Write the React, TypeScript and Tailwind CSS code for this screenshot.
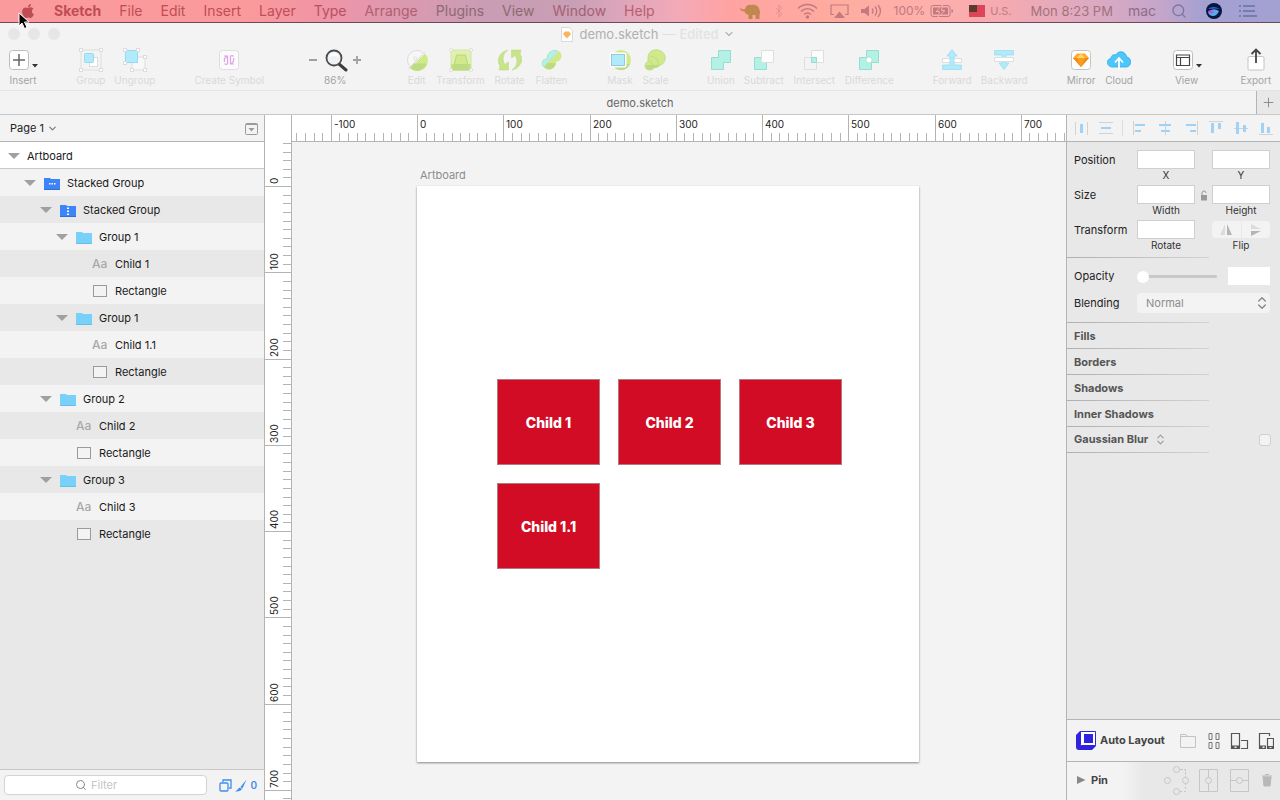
import { ReactNode } from "react";
import clsx from "clsx";
import { Bluetooth, ChevronDown, ChevronsUpDown, Plus, Search } from "lucide-react";
import { FaApple } from "react-icons/fa";

type Layer = {
  name: string;
  depth: 1 | 2 | 3 | 4;
  kind: "row" | "column" | "group" | "text" | "shape";
};

type ToolProps = {
  label: string;
  width: string;
  children: ReactNode;
  enabled?: boolean;
};

const menus = [
  { name: "File", color: "text-[#bf4d55]" },
  { name: "Edit", color: "text-[#bf4d55]" },
  { name: "Insert", color: "text-[#bf4d55]" },
  { name: "Layer", color: "text-[#bf4d58]" },
  { name: "Type", color: "text-[#b8505f]" },
  { name: "Arrange", color: "text-[#b0606f]" },
  { name: "Plugins", color: "text-[#8d6a70]" },
  { name: "View", color: "text-[#8d6a70]" },
  { name: "Window", color: "text-[#a55f72]" },
  { name: "Help", color: "text-[#b76070]" },
];

const layers: Layer[] = [
  { name: "Stacked Group", depth: 1, kind: "row" },
  { name: "Stacked Group", depth: 2, kind: "column" },
  { name: "Group 1", depth: 3, kind: "group" },
  { name: "Child 1", depth: 4, kind: "text" },
  { name: "Rectangle", depth: 4, kind: "shape" },
  { name: "Group 1", depth: 3, kind: "group" },
  { name: "Child 1.1", depth: 4, kind: "text" },
  { name: "Rectangle", depth: 4, kind: "shape" },
  { name: "Group 2", depth: 2, kind: "group" },
  { name: "Child 2", depth: 3, kind: "text" },
  { name: "Rectangle", depth: 3, kind: "shape" },
  { name: "Group 3", depth: 2, kind: "group" },
  { name: "Child 3", depth: 3, kind: "text" },
  { name: "Rectangle", depth: 3, kind: "shape" },
];

const indent = { 1: "pl-6", 2: "pl-10", 3: "pl-14", 4: "pl-18" };

const ZOOM = 0.8625;

function MenuBar() {
  return (
    <header className="flex h-[23px] shrink-0 items-center border-b border-[#6b4a55] bg-[linear-gradient(90deg,#fb9a9c_0%,#fb9a9c_19%,#f095a5_25%,#dd99b0_31%,#c99db4_38%,#c99fb5_45%,#dba5bb_48%,#f3aab8_53%,#ffa3a2_57%,#ffab9f_65%,#ffb0aa_72%,#f3aab2_79%,#d6a9c4_87%,#c3a5cb_91%,#a3a1d1_94%,#a3a1d1_100%)] pr-[23px] pl-5 text-[14px] leading-[22px]">
      <nav className="flex items-center gap-[18px]">
        <button aria-label="Apple" className="text-[#bf4d55]">
          <FaApple size={16} />
        </button>
        <button className="font-bold text-[#bf4d55]">Sketch</button>
        {menus.map((menu) => (
          <button key={menu.name} className={menu.color}>
            {menu.name}
          </button>
        ))}
      </nav>
      <div className="ml-auto flex items-center gap-[15px] text-[#c07a80]">
        <svg width="22" height="17" viewBox="0 0 22 17" fill="#c08850">
          <path d="M1 4c1 2 3 3 5 2C7 2 10 1 12 2c4-1 8 1 8.500 5 1 2 .5 4 0 5v4h-4v-4h-3v4H9.500v-4C7 11 6 10 5.500 8.500 2.500 8.500 1 7 1 4z" />
        </svg>
        <Bluetooth size={14} strokeWidth={1.25} className="-mx-1 opacity-60" />
        <div className="flex items-center gap-3">
          <svg width="21" height="16" viewBox="0 0 21 16" fill="none" stroke="currentColor" strokeWidth="1.500">
            <path d="M1 5.500C6.500.2 14.500.2 20 5.500M4 8.500c4-3.600 9-3.600 13 0M7 11.500c2.200-1.900 4.800-1.900 7 0" />
            <circle cx="10.500" cy="14" r="1" fill="currentColor" />
          </svg>
          <svg width="19" height="15" viewBox="0 0 19 15">
            <path d="M4 10.500H1V1h17v9.500h-3" fill="none" stroke="currentColor" strokeWidth="1.200" />
            <path d="M9.500 7.500l5.500 6.500H4z" fill="currentColor" />
          </svg>
          <svg width="21" height="14" viewBox="0 0 21 14" fill="none" stroke="currentColor" strokeWidth="1.300">
            <path d="M0 5v4h3.500L8 12.500v-11L3.500 5z" fill="currentColor" stroke="none" />
            <path d="M11 4.500q2 2.500 0 5M14 2.500q3.500 4.500 0 9M17 1q5 6 0 12" />
          </svg>
          <span className="text-[12px]">100%</span>
        </div>
        <svg width="24" height="14" viewBox="0 0 24 14" className="-ml-2.5">
          <rect x="1" y="1.500" width="19" height="11" rx="2" fill="none" stroke="currentColor" />
          <rect x="3" y="3.500" width="15" height="7" fill="currentColor" />
          <path d="M21.500 5v4l1.500-1V6z" fill="currentColor" />
          <path d="M12.500 1L6 7.500h3.500L8 13l7-6.500h-3.500z" fill="currentColor" stroke="#ffb0aa" />
        </svg>
        <div className="flex items-center gap-[5px]">
          <svg width="16" height="12" viewBox="0 0 16 12">
            <path d="M0 0h16v12H0z" fill="#dd4558" />
            <path d="M0 0h8v7H0z" fill="#5d3a30" />
          </svg>
          <span className="text-[11px]">U.S.</span>
        </div>
        <span className="pl-1 text-[13px] text-[#a1737f]">Mon 8:23 PM</span>
        <span className="text-[#8d6d8a]">mac</span>
        <Search size={16} strokeWidth={2} className="text-[#7a789f]" />
        <svg width="20" height="18" viewBox="0 0 20 18" className="ml-0.5">
          <circle cx="10" cy="9" r="8" fill="#07163f" />
          <path d="M4 7q5-4 12 0-4-1-12 0z" fill="#2c6fd8" />
          <path d="M4 10q5-5 11-1-2 5-6 5-4 0-5-4z" fill="#5aa8e8" />
          <path d="M4 9q3-2 6 1-4 3-6-1z" fill="#c04be0" />
        </svg>
        <svg width="18" height="12" viewBox="0 0 18 12" stroke="#6670a5" strokeWidth="1.500">
          <path d="M0 1h2M4 1h12M0 6h2M4 6h12M0 11h2M4 11h14" />
        </svg>
      </div>
    </header>
  );
}

function Tool({ label, width, children, enabled }: ToolProps) {
  return (
    <button className={clsx("flex flex-col items-center", width)}>
      <span className="flex h-6 items-center">{children}</span>
      <span
        className={clsx(
          "text-[10px] leading-4 whitespace-nowrap",
          enabled ? "text-[#a3a3a3]" : "text-[#d9d9d9]"
        )}
      >
        {label}
      </span>
    </button>
  );
}

function ToolGroup({ children }: { children: ReactNode }) {
  return <div className="flex items-start gap-[9px]">{children}</div>;
}

function Icon({ children, size = 24 }: { children: ReactNode; size?: number }) {
  return (
    <svg width={size} height="24" viewBox={`0 0 ${size} 24`} fill="none" className="shrink-0">
      {children}
    </svg>
  );
}

function Handles({ points }: { points: number[][] }) {
  return (
    <>
      {points.map(([x, y]) => (
        <rect key={`${x}-${y}`} x={x - 1.5} y={y - 1.5} width="3" height="3" fill="#fff" stroke="#dcdcdc" />
      ))}
    </>
  );
}

function Toolbar() {
  return (
    <div className="flex h-[46px] shrink-0 justify-between border-b border-[#e4e4e4] px-2 pt-[3px]">
      <ToolGroup>
        <Tool label="Insert" width="w-[30px]" enabled>
          <Icon size={30}>
            <rect x="1.500" y="2.500" width="19" height="19" rx="3" fill="#fff" stroke="#bdbdbd" />
            <path d="M11 6v12M5 12h12" stroke="#666" strokeWidth="1.500" />
            <path d="M24 16h6l-3 3.500z" fill="#333" />
          </Icon>
        </Tool>
      </ToolGroup>
      <ToolGroup>
        <Tool label="Group" width="w-[29px]">
          <Icon>
            <rect x="2" y="2" width="20" height="20" stroke="#dedede" />
            <rect x="10.500" y="9.500" width="8" height="9" fill="#fff" stroke="#dcdcdc" />
            <rect x="5.500" y="5.500" width="9" height="9" rx="1" fill="#b0eafb" stroke="#94dbf0" />
            <Handles points={[[2, 2], [22, 2], [2, 22], [22, 22]]} />
          </Icon>
        </Tool>
        <Tool label="Ungroup" width="w-[41px]">
          <Icon>
            <rect x="9" y="9" width="13" height="13" fill="#f8f8f8" stroke="#dedede" />
            <rect x="2.500" y="2.500" width="12" height="12" fill="#b0eafb" stroke="#94dbf0" />
            <Handles points={[[2, 2], [15, 2], [2, 15], [22, 9], [9, 22], [22, 22]]} />
          </Icon>
        </Tool>
      </ToolGroup>
      <ToolGroup>
        <Tool label="Create Symbol" width="w-[71px]">
          <Icon>
            <rect x="2.500" y="2.500" width="19" height="19" rx="3" fill="#fbfbfb" stroke="#dedede" />
            <path d="M7 8h3.500v8q-2 1-3-.5M10.500 8Q6.500 10 7.500 14M17 16h-3.500V8q2-1 3 .5M13.500 16q4-2 3-6" stroke="#dfa3ea" strokeWidth="1.200" />
          </Icon>
        </Tool>
      </ToolGroup>
      <ToolGroup>
        <Tool label="86%" width="w-16" enabled>
          <Icon size={54}>
            <path d="M1 12h8M45 12h8M49 8v8" stroke="#a0a0a0" strokeWidth="1.800" />
            <path d="M31 16l7 6" stroke="#3d3d3d" strokeWidth="3" strokeLinecap="round" />
            <circle cx="26" cy="10" r="7.500" fill="#eef2f4" stroke="#4b4b4b" strokeWidth="1.800" />
            <path d="M21 9q1-4 5-4.500 4 .5 5 4.500-5-2-10 0z" fill="#fff" />
          </Icon>
        </Tool>
      </ToolGroup>
      <ToolGroup>
        <Tool label="Edit" width="w-[22px]">
          <Icon>
            <circle cx="12" cy="12" r="9.500" fill="#f7f7f7" stroke="#dcdcdc" />
            <path d="M5 20L20 5.500A10 10 0 0 1 5 20z" fill="#cfe98b" />
            <path d="M5 20l4-4.500h12.500A10 10 0 0 1 5 20z" fill="#bddc82" />
            <path d="M3 21L20 4" stroke="#dcdcdc" />
            <circle cx="10" cy="10.500" r="1.500" fill="#fff" stroke="#dcdcdc" />
          </Icon>
        </Tool>
        <Tool label="Transform" width="w-[48px]">
          <Icon>
            <path d="M2 2h20v20H2z" fill="#e0efb4" stroke="#d3e79c" />
            <path d="M2 16h20v6H2z" fill="#c5df91" />
            <path d="M4 22L7.500 7h9L20 22z" fill="#cfe98b" stroke="#b9d67c" />
            <path d="M5 16h14l1 6H4z" fill="#bddc82" />
            {[[2, 2], [22, 2], [2, 22], [22, 22]].map(([x, y]) => (
              <circle key={`${x}-${y}`} cx={x} cy={y} r="1.500" fill="#fff" stroke="#dcdcdc" />
            ))}
          </Icon>
        </Tool>
        <Tool label="Rotate" width="w-[32px]">
          <Icon>
            <path d="M10 2C1 4-2 13 2 18l-1 4h9.500v-8L7 16.500C3.500 12 5 5 10 2z" fill="#c8e489" stroke="#b9d67c" strokeWidth=".5" />
            <path d="M14 22c9-2 12-11 8-16l1-4h-9.500v8L17 7.500c3.500 4.500 2 11.500-3 14.500z" fill="#c8e489" stroke="#b9d67c" strokeWidth=".5" />
          </Icon>
        </Tool>
        <Tool label="Flatten" width="w-[34px]">
          <Icon>
            <path d="M3 18c-2-4 0-7 4-7 0-7 6-10 11-8L4 19z" fill="#b3f0e6" stroke="#97dccc" strokeWidth=".7" />
            <path d="M4 19L19 3c5 4 2 10-3 11-1 6-7 10-12 5z" fill="#cfe98b" />
            <path d="M4 19l4-4h8c-1 6-7 9-12 4z" fill="#bddc82" />
          </Icon>
        </Tool>
      </ToolGroup>
      <ToolGroup>
        <Tool label="Mask" width="w-[26px]">
          <Icon>
            <circle cx="13" cy="12" r="10" fill="#cfe98b" />
            <path d="M4 16h18q-3 6-9 6-6 0-9-6z" fill="#bddc82" />
            <rect x="2.500" y="5.500" width="15" height="13" rx="1" fill="#b0eafb" stroke="#fff" strokeWidth="2" />
            <rect x="3.500" y="6.500" width="13" height="11" stroke="#85bfd2" strokeWidth=".8" />
          </Icon>
        </Tool>
        <Tool label="Scale" width="w-[27px]">
          <Icon>
            <path d="M2 18C2 15 4 14 5 13L5 8C6 3 11 1 15 2c6 1 8 6 7 10-1 3-3 5-5 5-1 2-3 2-6 3-2 3-9 3-9-2z" fill="#cfe98b" stroke="#b9d67c" strokeWidth=".7" />
            <path d="M2.500 17h14c-1 2-3 2-6 3-2 3-8 2-8-3z" fill="#bddc82" />
            <path d="M5 13q4 0 6 6M7 8q7 0 9 9" stroke="#b9d67c" strokeWidth=".7" />
          </Icon>
        </Tool>
      </ToolGroup>
      <ToolGroup>
        <Tool label="Union" width="w-[27px]">
          <Icon>
            <path d="M9.500 2.500h12v12h-7v7h-12v-12h7z" fill="#b3f0e6" stroke="#97dccc" />
          </Icon>
        </Tool>
        <Tool label="Subtract" width="w-[41px]">
          <Icon>
            <path d="M2.500 9.500h12v12h-12z" fill="#b3f0e6" stroke="#97dccc" />
            <path d="M9.500 2.500h12v12h-12z" fill="#fcfcfc" stroke="#dedede" />
          </Icon>
        </Tool>
        <Tool label="Intersect" width="w-[42px]">
          <Icon>
            <path d="M9.500 2.500h12v12h-12z" fill="#fcfcfc" stroke="#dedede" />
            <path d="M2.500 9.500h12v12h-12z" stroke="#dedede" />
            <path d="M9.500 9.500h5v5h-5z" fill="#b3f0e6" stroke="#97dccc" />
          </Icon>
        </Tool>
        <Tool label="Difference" width="w-[50px]">
          <Icon>
            <path d="M9.500 2.500h12v12h-7v7h-12v-12h7z" fill="#b3f0e6" stroke="#97dccc" />
            <circle cx="12" cy="12" r="3" fill="#fff" stroke="#97dccc" strokeWidth=".6" />
          </Icon>
        </Tool>
      </ToolGroup>
      <ToolGroup>
        <Tool label="Forward" width="w-[39px]">
          <Icon>
            <path d="M2.500 10.500h19v4h-19z" fill="#fff" stroke="#dedede" />
            <path d="M12 1.500L17 8h-3v9h7.500v4.500h-19V17H10V8H7z" fill="#b0eafb" stroke="#94dbf0" strokeWidth=".7" />
          </Icon>
        </Tool>
        <Tool label="Backward" width="w-[47px]">
          <Icon>
            <path d="M2.500 2.500h19V7H14v8h3l-5 6.500L7 15h3V7H2.500z" fill="#b0eafb" stroke="#94dbf0" strokeWidth=".7" />
            <path d="M2.500 9.500h19v4h-19z" fill="#fff" stroke="#dedede" />
          </Icon>
        </Tool>
      </ToolGroup>
      <ToolGroup>
        <Tool label="Mirror" width="w-[30px]" enabled>
          <Icon>
            <rect x="2.500" y="2.500" width="19" height="19" rx="3" fill="#fff" stroke="#c4c4c4" />
            <path d="M8 5.500h8l4 4.500-8 9-8-9z" fill="#fdad2a" />
            <path d="M4 10h16l-8 9z" fill="#ef8b16" />
            <path d="M8 10h8l-4 9z" fill="#fb9f1e" />
            <path d="M12 5.500L8 10h8z" fill="#ffd467" />
          </Icon>
        </Tool>
        <Tool label="Cloud" width="w-[28px]" enabled>
          <Icon>
            <path d="M5 19C-1 18-1 11 4 10.500 4 7 7 6 9 7c2-5 10-4 10.500 2 5 0 6 9 0 10z" fill="#4cc6fb" stroke="#2fa9e8" strokeWidth=".8" />
            <path d="M12 22V11M8 14.500L12 10l4 4.500" stroke="#fff" strokeWidth="1.800" />
          </Icon>
        </Tool>
      </ToolGroup>
      <ToolGroup>
        <Tool label="View" width="w-[30px]" enabled>
          <Icon size={30}>
            <rect x="1.500" y="2.500" width="19" height="19" rx="3" fill="#fff" stroke="#bdbdbd" />
            <path d="M4.500 7h13v10.500h-13zM4.500 9.500h13M8.500 9.500v8" stroke="#444" strokeWidth="1.200" />
            <path d="M24 16h6l-3 3.500z" fill="#333" />
          </Icon>
        </Tool>
      </ToolGroup>
      <ToolGroup>
        <Tool label="Export" width="w-8" enabled>
          <Icon>
            <path d="M5.500 8.500h13q1.500 0 1.500 1.500v11q0 1-1.500 1h-13q-1.500 0-1.500-1V10q0-1.500 1.500-1.500z" fill="#fff" stroke="#c4c4c4" />
            <path d="M12 15V2M7.500 6L12 1.500 16.500 6" stroke="#444" strokeWidth="1.800" />
          </Icon>
        </Tool>
      </ToolGroup>
    </div>
  );
}

function TitleBar() {
  return (
    <div className="grid h-[22px] shrink-0 grid-cols-[1fr_auto_1fr] items-center pl-2">
      <div className="flex gap-2">
        <button aria-label="Close" className="size-3 rounded-full bg-[#e6e6e6]" />
        <button aria-label="Minimize" className="size-3 rounded-full bg-[#e6e6e6]" />
        <button aria-label="Zoom" className="size-3 rounded-full bg-[#e6e6e6]" />
      </div>
      <div className="flex items-center gap-1 pl-2 text-[13px] leading-5">
        <svg width="12" height="15" viewBox="0 0 12 15" className="mr-0.5">
          <path d="M.5.5h8l3 3v11H.5z" fill="#fff" stroke="#dadada" />
          <path d="M4 4.500h4l2 2.500-4 4.500L2 7z" fill="#fbb45a" />
        </svg>
        <h1 className="text-[#b0b0b0]">demo.sketch</h1>
        <span className="text-[#dedede]">—</span>
        <span className="font-medium text-[#e2e2e2]">Edited</span>
        <ChevronDown size={12} strokeWidth={2.5} className="text-[#b5b5b5]" />
      </div>
    </div>
  );
}

function LayerIcon({ kind }: { kind: Layer["kind"] }) {
  if (kind === "text") {
    return <span className="w-4 text-[12px] font-medium text-[#a8a8a8]">Aa</span>;
  }
  if (kind === "shape") {
    return <span className="mx-px h-3 w-3.5 border border-[#9a9a9a] bg-[#f3f3f3]" />;
  }
  const stacked = kind !== "group";
  return (
    <svg width="16" height="13" viewBox="0 0 16 13">
      <path d="M0 1h6l1 1h9v10.500H0z" fill={stacked ? "#3d85f7" : "#79d0f8"} />
      <path d="M0 12h16v1H0z" fill={stacked ? "#2f6fd8" : "#67bfe6"} />
      {kind === "row" && <path d="M5 6h1.500v1.500H5zM7.500 6H9v1.500H7.500zM10 6h1.500v1.500H10z" fill="#fff" />}
      {kind === "column" && <path d="M7 3.500h2V5H7zM7 6.500h2V8H7zM7 9.500h2V11H7z" fill="#fff" />}
    </svg>
  );
}

function Disclosure() {
  return (
    <svg width="12" height="6" viewBox="0 0 12 6" fill="#a0a0a0">
      <path d="M0 0h12L6 6z" />
    </svg>
  );
}

function Sidebar() {
  return (
    <aside className="flex w-[265px] shrink-0 flex-col border-r border-[#b4b4b4] bg-[#e8e8e8]">
      <div className="flex h-[27px] shrink-0 items-center justify-between border-b border-[#b4b4b4] bg-[#f3f3f3] pr-[5px] pl-[10px]">
        <button className="flex items-center gap-[3px] text-[11px] text-[#222]">
          Page 1
          <ChevronDown size={11} strokeWidth={2.5} className="text-[#777]" />
        </button>
        <button aria-label="Toggle page list" className="pt-0.5">
          <svg width="14" height="12" viewBox="0 0 14 12" fill="none">
            <rect x=".5" y=".5" width="12" height="11" rx="1" stroke="#9a9a9a" />
            <path d="M1 1.500h12" stroke="#9a9a9a" />
            <path d="M3.500 5h6l-3 3.500z" fill="#9a9a9a" />
          </svg>
        </button>
      </div>
      <ul className="flex-1 overflow-hidden text-[11px] text-[#1a1a1a]">
        <li className="flex h-[27px] items-center gap-[7px] border-b border-[#c8c8c8] bg-white pt-0.5 pl-2">
          <Disclosure />
          Artboard
        </li>
        {layers.map((layer, i) => {
          const leaf = layer.kind === "text" || layer.kind === "shape";
          return (
            <li
              key={i}
              className={clsx(
                "flex h-[27px] items-center gap-[7px] pt-px",
                indent[layer.depth],
                i % 2 === 0 ? "bg-[#f3f3f3]" : "bg-[#e8e8e8]"
              )}
            >
              <span className="w-[13px]">{!leaf && <Disclosure />}</span>
              <LayerIcon kind={layer.kind} />
              {layer.name}
            </li>
          );
        })}
      </ul>
      <div className="flex h-[31px] shrink-0 items-center border-t border-[#c8c8c8] bg-[#f3f3f3] pr-[7px] pl-1">
        <label className="flex h-5 w-[203px] items-center gap-1 rounded border border-[#d4d4d4] bg-white pl-[70px]">
          <Search size={12} strokeWidth={2} className="shrink-0 text-[#888]" />
          <input
            aria-label="Filter layers"
            placeholder="Filter"
            className="w-full min-w-0 text-[11px] outline-none placeholder:text-[#c4c4c4]"
          />
        </label>
        <div className="ml-auto flex items-center gap-[3px] text-[#3d8ff0]">
          <svg width="13" height="13" viewBox="0 0 13 13" fill="none" stroke="currentColor" strokeWidth="1.300">
            <path d="M4 3V1h8v8h-2" />
            <rect x="1" y="4" width="8" height="8" rx="1" />
          </svg>
          <svg width="12" height="13" viewBox="0 0 12 13" fill="currentColor">
            <path d="M11.500.5L7.500 9.500l-2-1.500zM5 8.500l2 1.500c-1 2-4 2.500-7 2.500 2-.5 3-3.500 5-4z" />
          </svg>
          <span className="text-[10px] font-semibold">0</span>
        </div>
      </div>
    </aside>
  );
}

// ticks every 10 units, labelled every 100
function HorizontalRuler() {
  const ticks = Array.from({ length: 90 }, (_, i) => (i - 14) * 10);
  return (
    <svg className="block h-[27px] w-full border-b border-[#b4b4b4] bg-white">
      {ticks.map((value) => {
        const x = Math.round(125 + value * ZOOM);
        const major = value % 100 === 0;
        return (
          <g key={value}>
            <rect x={x} y={major ? 0 : 18} width="1" height="27" fill="#b4b4b4" />
            {major && (
              <text x={x + 3} y="13" fontSize="10" fill="#222">
                {value}
              </text>
            )}
          </g>
        );
      })}
    </svg>
  );
}

function VerticalRuler() {
  const ticks = Array.from({ length: 82 }, (_, i) => (i - 5) * 10);
  return (
    <svg className="block w-full flex-1">
      {ticks.map((value) => {
        const y = Math.round(44 + value * ZOOM);
        const major = value % 100 === 0;
        return (
          <g key={value}>
            <rect x={major ? 0 : 18} y={y} width="27" height="1" fill="#b4b4b4" />
            {major && (
              <text transform={`translate(13 ${y - 2}) rotate(-90)`} fontSize="10" fill="#222">
                {value}
              </text>
            )}
          </g>
        );
      })}
    </svg>
  );
}

function Canvas() {
  return (
    <main className="flex min-w-0 flex-1">
      <div className="flex w-[27px] shrink-0 flex-col border-r border-[#b4b4b4] bg-white">
        <div className="h-[27px] shrink-0" />
        <VerticalRuler />
      </div>
      <div className="flex min-w-0 flex-1 flex-col">
        <HorizontalRuler />
        <div className="relative flex-1 overflow-hidden bg-[#f3f3f3]">
          <section className="absolute top-6 left-[125px]">
            <h2 className="pb-0.5 pl-[3px] text-[11px] leading-[18px] text-[#8c8c8c]">Artboard</h2>
            <div className="flex h-[576px] w-[502px] flex-wrap content-start gap-[18px] bg-white pt-[193px] pr-16 pl-20 shadow-[0_1px_2px_rgba(0,0,0,0.45)]">
              {["Child 1", "Child 2", "Child 3", "Child 1.1"].map((name) => (
                <div
                  key={name}
                  className="flex h-[86px] w-[103px] items-center justify-center border border-[#b07a7e] bg-[#d20c24] text-[14px] font-extrabold text-white"
                >
                  {name}
                </div>
              ))}
            </div>
          </section>
        </div>
      </div>
    </main>
  );
}

function Divider() {
  return <div className="h-px w-2/3 bg-linear-to-r from-[#b0b0b0] to-[#d2d2d2]" />;
}

function Field({ label }: { label: string }) {
  return (
    <label className="flex w-[58px] flex-col items-center text-[10px] leading-3 text-[#333]">
      <input className="h-[19px] w-full border border-[#cfcfcf] bg-white px-1 outline-none" />
      <span>{label}</span>
    </label>
  );
}

function AlignBar() {
  const items = [
    { name: "Distribute horizontally", gray: "M2.500 2v13M14.500 2v13", blue: "M7 4h3v9H7z" },
    { name: "Distribute vertically", gray: "M1 2.500h14M1 13.500h14", blue: "M3 7h10v2H3z" },
    { name: "Align left", gray: "M1.500 1v14", blue: "M3 4h10v2H3zM3 10h6v2H3z" },
    { name: "Align center", gray: "M8.500 1v14", blue: "M2 4h12v2H2zM4 10h9v2H4z" },
    { name: "Align right", gray: "M14.500 1v14", blue: "M3 4h10v2H3zM7 10h6v2H7z" },
    { name: "Align top", gray: "M1 1.500h14", blue: "M3 3h3v10H3zM10 3h3v6h-3z" },
    { name: "Align middle", gray: "M1 8.500h14", blue: "M3 2h3v12H3zM10 5h3v7h-3z" },
    { name: "Align bottom", gray: "M1 14.500h14", blue: "M3 3h3v10H3zM9 7h3v6H9z" },
  ];
  return (
    <div className="flex h-[27px] shrink-0 items-center justify-between border-b border-[#b4b4b4] bg-[#f3f3f3] px-[6px]">
      {items.map((item, i) => (
        <button
          key={item.name}
          aria-label={item.name}
          className={clsx(i === 1 && "border-r border-[#dcdcdc] pr-2")}
        >
          <svg width="16" height="16" viewBox="0 0 16 16">
            <path d={item.gray} stroke="#d2d2d2" />
            <path d={item.blue} fill="#a0d2f7" />
          </svg>
        </button>
      ))}
    </div>
  );
}

function Inspector() {
  return (
    <aside className="flex w-[214px] shrink-0 flex-col border-l border-[#b4b4b4] bg-[#e8e8e8] text-[11px] text-[#222]">
      <AlignBar />
      <div className="flex flex-col pt-2 pr-[10px] pb-[2px] pl-[7px]">
        <div className="flex h-[35px] items-start">
          <span className="w-[63px] leading-5">Position</span>
          <Field label="X" />
          <span className="flex-1" />
          <Field label="Y" />
        </div>
        <div className="flex h-[35px] items-start">
          <span className="w-[63px] leading-5">Size</span>
          <Field label="Width" />
          <button aria-label="Lock proportions" className="flex h-5 flex-1 items-center justify-center">
            <svg width="8" height="11" viewBox="0 0 8 11">
              <path d="M2 5V3q0-2 2-2t2 2" fill="none" stroke="#999" />
              <rect x="1" y="5" width="6" height="5.500" fill="#999" />
            </svg>
          </button>
          <Field label="Height" />
        </div>
        <div className="flex h-[35px] items-start">
          <span className="w-[63px] leading-5">Transform</span>
          <Field label="Rotate" />
          <span className="flex-1" />
          <div className="w-[58px] text-center text-[10px] leading-3 text-[#333]">
            <div className="flex h-[19px] gap-px py-px">
              <button
                aria-label="Flip horizontal"
                className="flex flex-1 items-center justify-center rounded-l bg-[#f3f3f3]"
              >
                <svg width="14" height="11" viewBox="0 0 14 11">
                  <path d="M6 0v11H1z" fill="#dcdcdc" />
                  <path d="M8 0v11h5z" fill="#b5b5b5" />
                </svg>
              </button>
              <button
                aria-label="Flip vertical"
                className="flex flex-1 items-center justify-center rounded-r bg-[#f3f3f3]"
              >
                <svg width="12" height="12" viewBox="0 0 12 12">
                  <path d="M1 0v5h10z" fill="#dcdcdc" />
                  <path d="M1 12V7h10z" fill="#b5b5b5" />
                </svg>
              </button>
            </div>
            <span className="block">Flip</span>
          </div>
        </div>
      </div>
      <Divider />
      <div className="flex flex-col gap-[7px] pt-2 pr-[10px] pb-[9px] pl-[7px]">
        <div className="flex h-5 items-center">
          <label htmlFor="opacity" className="w-[63px]">
            Opacity
          </label>
          <input
            id="opacity"
            type="range"
            defaultValue={0}
            className="h-3 w-20 appearance-none bg-transparent [&::-webkit-slider-runnable-track]:h-[3px] [&::-webkit-slider-runnable-track]:rounded [&::-webkit-slider-runnable-track]:bg-[#c8c8c8] [&::-webkit-slider-thumb]:-mt-1 [&::-webkit-slider-thumb]:size-3 [&::-webkit-slider-thumb]:appearance-none [&::-webkit-slider-thumb]:rounded-full [&::-webkit-slider-thumb]:bg-white"
          />
          <input aria-label="Opacity value" className="ml-auto h-[18px] w-[42px] bg-white px-1 outline-none" />
        </div>
        <div className="flex h-5 items-center">
          <label htmlFor="blending" className="w-[63px]">
            Blending
          </label>
          <div className="relative flex-1">
            <select
              id="blending"
              className="h-5 w-full appearance-none rounded bg-[#f3f3f3] pl-[9px] text-[11px] text-[#8c8c8c] outline-none"
            >
              <option>Normal</option>
            </select>
            <ChevronsUpDown
              size={16}
              strokeWidth={2}
              className="pointer-events-none absolute top-[2px] right-0 text-[#888]"
            />
          </div>
        </div>
      </div>
      {["Fills", "Borders", "Shadows", "Inner Shadows"].map((title) => (
        <section key={title}>
          <Divider />
          <h3 className="pt-px pl-[7px] text-[11px] leading-6 font-bold text-[#555]">{title}</h3>
        </section>
      ))}
      <Divider />
      <div className="flex h-[25px] items-center pr-[9px] pl-[7px]">
        <label htmlFor="blur" className="text-[11px] font-bold text-[#555]">
          Gaussian Blur
        </label>
        <ChevronsUpDown size={13} className="ml-[6px] text-[#999]" />
        <input
          id="blur"
          type="checkbox"
          className="ml-auto size-3 appearance-none rounded-[3px] border border-[#d0d0d0] bg-[#f3f3f3]"
        />
      </div>
      <Divider />
      <div className="mt-auto flex h-[42px] shrink-0 items-center border-t border-[#b4b4b4] bg-[#f3f3f3] pr-[6px] pl-2">
        <svg width="22" height="21" viewBox="0 0 22 21" className="mr-[3px]">
          <path d="M5 1L1 5v12q0 3 3 3h13l4-4V1z" fill="#2f23e0" />
          <rect x="5.500" y="1.500" width="15" height="14" rx="1" fill="#fff" stroke="#2f23e0" />
          <rect x="9" y="4" width="9" height="9" fill="#2f23e0" />
        </svg>
        <span className="text-[11px] font-bold text-[#444]">Auto Layout</span>
        <svg width="94" height="18" viewBox="0 0 94 18" fill="none" className="ml-auto">
          <path d="M.5 15.500v-13h5.500l1.500 2h8v11zM.5 4.500h7" stroke="#c2c2c2" />
          <path d="M29 1.500h3v6h-3zM36 1.500h3v6h-3zM29 10.500h3v6h-3zM36 10.500h3v6h-3z" stroke="#777" />
          <path d="M51.500 1.500h8v15h-8zM61 8.500h6.500v8H61" stroke="#555" strokeWidth="1.200" />
          <path d="M51 13.500h9V17h-9zM66 16h2v1h-2z" fill="#555" />
          <path d="M54.500 14.500h2v1.500h-2z" fill="#f3f3f3" />
          <path d="M89.500 4V1.500h-10v15h6.500M87.500 6.500h6v10h-6z" stroke="#555" strokeWidth="1.200" />
          <path d="M79 13.500h7V17h-7zM87 14h7v3h-7z" fill="#555" />
          <path d="M82.500 14.500h2v1.500h-2zM89.500 15h2v1h-2z" fill="#f3f3f3" />
        </svg>
      </div>
      <div className="flex h-[39px] shrink-0 items-center border-t border-[#b4b4b4] bg-linear-to-r from-[#f3f3f3] from-[26%] to-[#e8e8e8] to-[36%] pr-2 pb-0.5 pl-[10px]">
        <svg width="9" height="8" viewBox="0 0 9 8" className="mr-[5px]">
          <path d="M0 0l8.500 4L0 8z" fill="#888" />
        </svg>
        <span className="text-[11px] font-bold text-[#444]">Pin</span>
        <svg width="108" height="30" viewBox="0 0 108 30" fill="none" stroke="#c6c6c6" className="ml-auto">
          <circle cx="3.500" cy="15.500" r="3" />
          <circle cx="12.500" cy="4.500" r="3" />
          <circle cx="12.500" cy="26.500" r="3" />
          <circle cx="21.500" cy="15.500" r="3" />
          <path d="M16 4.500h5.500v8" strokeDasharray="3 1" />
          <path d="M16 26.500h5.500v-8" strokeDasharray="2 2" />
          <path d="M35.500 4.500h18v22h-18zM44.500 4.500v8M44.500 18.500v8" />
          <circle cx="44.500" cy="15.500" r="3" />
          <path d="M66.500 4.500h18v22h-18zM66.500 15.500h6M78.500 15.500h6" />
          <circle cx="75.500" cy="15.500" r="3" />
          <path d="M98 11h10M101 9.500h4M99 12l1 9h6l1-9z" fill="#b8b8b8" stroke="#b8b8b8" />
        </svg>
      </div>
    </aside>
  );
}

export default function App() {
  return (
    <div className="relative flex h-screen flex-col overflow-hidden bg-[#f3f3f3] font-[Inter,'Liberation_Sans',sans-serif]">
      <MenuBar />
      <TitleBar />
      <Toolbar />
      <div className="flex h-6 shrink-0 border-b border-[#c8c8c8]">
        <div className="flex-1 pl-6 text-center text-[11px] leading-6 text-[#666]">demo.sketch</div>
        <button
          aria-label="New tab"
          className="flex w-6 items-center justify-center border-l border-[#b4b4b4] bg-[#e8e8e8] text-[#888]"
        >
          <Plus size={15} strokeWidth={1.5} />
        </button>
      </div>
      <div className="flex min-h-0 flex-1">
        <Sidebar />
        <Canvas />
        <Inspector />
      </div>
      <svg width="12" height="18" viewBox="0 0 12 18" className="pointer-events-none absolute top-3 left-[18px]">
        <path d="M1 1v13l3-3 2.500 5.500 2.500-1L6.500 10H11z" fill="#000" stroke="#fff" />
      </svg>
    </div>
  );
}
